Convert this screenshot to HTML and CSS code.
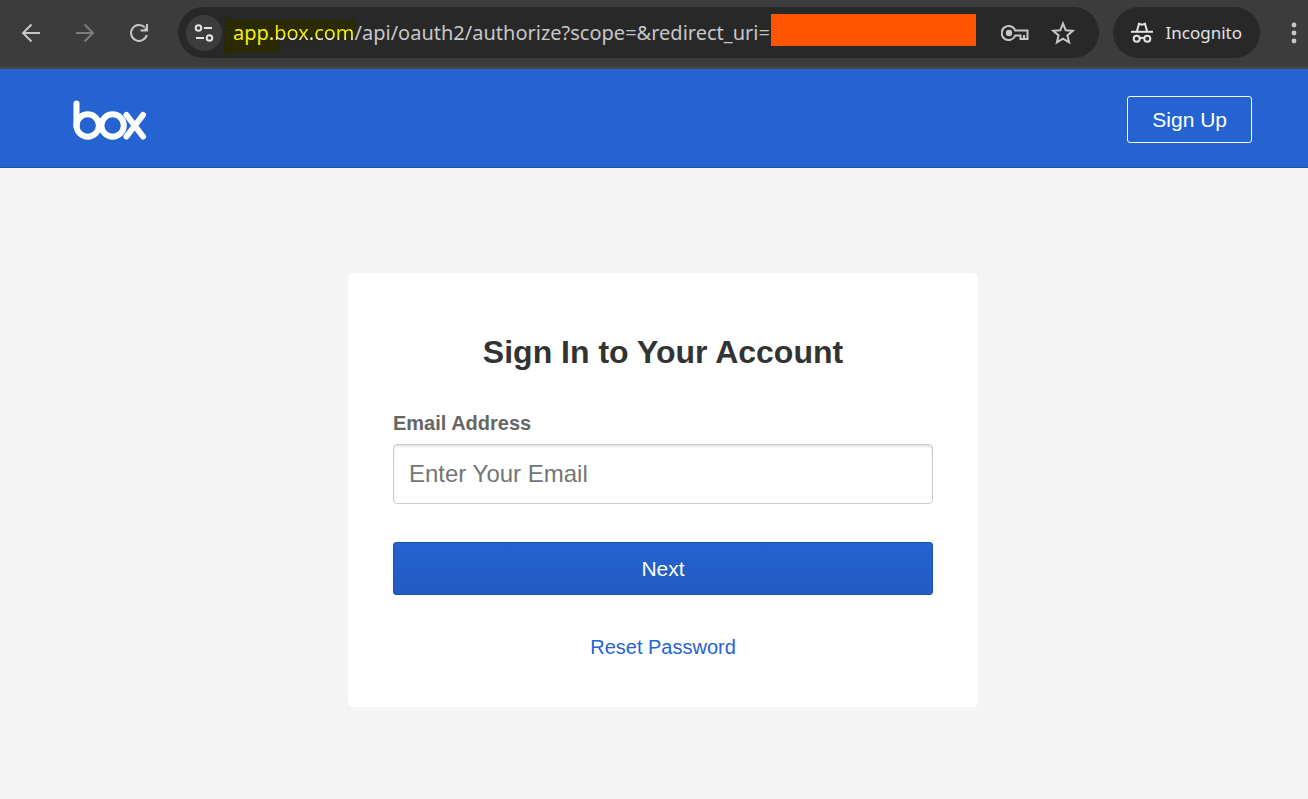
FILE: index.html
```
<!DOCTYPE html>
<html lang="en">
<head>
    <meta charset="UTF-8">
    <title>Box | Login</title>
    <link rel="stylesheet" href="styles.css">
</head>
<body>
    <div class="toolbar">
        <button type="button" class="nav-btn" aria-label="Back">
            <svg width="20" height="20" viewBox="0 0 20 20"><path d="M19 10H2M10.500 1.500 2 10l8.500 8.500"/></svg>
        </button>
        <button type="button" class="nav-btn disabled" aria-label="Forward">
            <svg width="20" height="20" viewBox="0 0 20 20"><path d="M1 10h17M9.500 1.500 18 10l-8.500 8.500"/></svg>
        </button>
        <button type="button" class="nav-btn" aria-label="Reload">
            <svg width="20" height="20" viewBox="0 0 20 20"><path d="M17.800 12A8 8 0 1 1 15.800 4.300"/><path class="solid" d="M19 1V8.500H11.500V6.500H14.800L17 4.300V1Z"/></svg>
        </button>
        <div class="omnibox">
            <button type="button" class="site-info" aria-label="View site information">
                <svg width="20" height="20" viewBox="0 0 20 20"><circle cx="4.500" cy="5" r="2.800"/><path d="M10 5h8M2 15h8"/><circle cx="15.500" cy="15" r="2.800"/></svg>
            </button>
            <div class="url">
                <svg class="marker" width="132" height="38" viewBox="0 0 132 38"><path d="M1 0 8 4H131V24H125L55 25V35L50 36H16L0 38Z"/></svg>
                <span class="url-text"><span class="sub">app.</span><span class="host">box.com</span>/api/oauth2/authorize?scope=&amp;redirect_uri=</span>
                <span class="redacted"></span>
            </div>
            <button type="button" class="icon-btn" aria-label="Manage passwords">
                <svg width="28" height="18" viewBox="0 0 28 18"><path d="M14.200 6.500A7 7 0 1 0 14.200 11.500H19.500V15H26.500V6.500Z"/><path d="M23 11v4"/><circle class="solid" cx="8" cy="9" r="3.200"/></svg>
            </button>
            <button type="button" class="icon-btn" aria-label="Bookmark this tab">
                <svg width="24" height="24" viewBox="0 0 24 24"><path d="m12 2.500 2.700 6.700 7.100.600-5.400 4.600 1.700 7L12 17.600l-6.100 3.800 1.700-7L2.200 9.800l7.100-.600Z"/></svg>
            </button>
        </div>
        <button type="button" class="incognito">
            <svg width="22" height="22" viewBox="0 0 22 22"><path d="M0 9.800h22"/><path d="M5.800 9.800 8 1.700l3 .900 3-.900 2.200 8.100"/><circle cx="5.700" cy="16.800" r="3"/><circle cx="16.300" cy="16.800" r="3"/><path d="M8.700 16.300q2.300-1 4.600 0"/></svg>
            Incognito
        </button>
        <button type="button" class="menu-btn" aria-label="Menu">
            <svg width="6" height="22" viewBox="0 0 6 22"><circle cx="3" cy="3" r="2.400"/><circle cx="3" cy="11" r="2.400"/><circle cx="3" cy="19" r="2.400"/></svg>
        </button>
    </div>

    <header class="header">
        <a href="#" class="logo" aria-label="Box">
            <svg width="74" height="41" viewBox="0 0 74 41"><path d="M3.500 3.500V26"/><circle cx="14.700" cy="25.500" r="11.200"/><circle cx="39.600" cy="25.500" r="11.200"/><path d="m53.500 15 16.500 21.500M70 15 53.500 36.500"/></svg>
        </a>
        <a href="#" class="signup">Sign Up</a>
    </header>

    <main class="main">
        <form class="card">
            <h1>Sign In to Your Account</h1>
            <label for="email">Email Address</label>
            <input type="email" id="email" name="email" placeholder="Enter Your Email">
            <button type="submit" class="next">Next</button>
            <a href="#" class="reset">Reset Password</a>
        </form>
    </main>
</body>
</html>
```
FILE: styles.css
```
* {
    box-sizing: border-box;
}
body {
    margin: 0;
    min-height: 100vh;
    font-family: "Liberation Sans", Arial, sans-serif;
    background-color: #f4f4f4;
    overflow-x: hidden;
}
svg {
    display: block;
    flex: none;
    fill: none;
    stroke: currentColor;
    stroke-width: 2;
}
button {
    font-family: inherit;
    border: none;
    cursor: pointer;
}

/* Browser toolbar */
.toolbar {
    display: flex;
    align-items: center;
    height: 69px;
    padding: 0 11px 2px 4px;
    background-color: #3c3c3c;
    border-bottom: 2px solid #474747;
    color: #c7c7c7;
    font-family: "Noto Sans", "Open Sans", sans-serif;
}
.toolbar button {
    display: flex;
    align-items: center;
    justify-content: center;
    flex: none;
    padding: 0;
    background: none;
    color: inherit;
}
.toolbar .nav-btn {
    width: 54px;
    height: 54px;
}
.toolbar .disabled {
    color: #7c7c7c;
}
.omnibox {
    display: flex;
    align-items: center;
    flex: 1;
    height: 51px;
    margin-left: 12px;
    padding: 0 12px 0 8px;
    border-radius: 26px;
    background-color: #282828;
}
.toolbar .site-info {
    width: 36px;
    height: 36px;
    border-radius: 50%;
    background-color: #3c3c3c;
    color: #e3e3e3;
}
.url {
    position: relative;
    display: flex;
    align-items: center;
    flex: 1;
    margin-left: 11px;
    font-size: 20px;
    line-height: 32px;
    white-space: nowrap;
}
.marker {
    position: absolute;
    left: -9px;
    top: 2px;
    fill: #2b2900;
    stroke: none;
}
.url-text {
    position: relative;
}
.sub {
    color: #f0f000;
}
.host {
    color: transparent;
    background: linear-gradient(#f0f000 65%, #ededed 65%);
    -webkit-background-clip: text;
    background-clip: text;
}
.redacted {
    width: 205px;
    height: 32px;
    margin: 0 0 6px 1px;
    background-color: #ff5500;
}
.toolbar .icon-btn {
    width: 48px;
    height: 48px;
}
.toolbar .solid {
    fill: currentColor;
    stroke: none;
}
.toolbar .incognito {
    gap: 13px;
    height: 51px;
    margin-left: 14px;
    padding: 0 18px;
    border-radius: 26px;
    background-color: #282828;
    color: #e3e3e3;
    font-size: 17px;
}
.toolbar .menu-btn {
    margin-left: 31px;
}
.menu-btn svg {
    fill: currentColor;
    stroke: none;
}

/* Box header */
.header {
    display: flex;
    align-items: center;
    justify-content: space-between;
    height: 99px;
    padding: 2px 56px 0 73px;
    background-color: #2563d1;
    border-bottom: 1px solid #1b55b8;
}
.logo {
    padding-top: 2px;
    color: #fff;
}
.logo svg {
    stroke-width: 6;
    stroke-linecap: round;
}
.signup {
    padding: 0 24px;
    border: 1px solid #fff;
    border-radius: 3px;
    color: #fff;
    font-size: 21px;
    line-height: 45px;
    text-decoration: none;
}

/* Sign in card */
.main {
    display: flex;
    justify-content: center;
    padding: 105px 0 40px 18px;
}
.card {
    display: flex;
    flex-direction: column;
    width: 630px;
    padding: 59px 45px 48px;
    border-radius: 5px;
    background-color: #fff;
}
h1 {
    margin: 0 0 40px;
    color: #333;
    font-size: 32px;
    line-height: 40px;
    text-align: center;
}
label {
    margin-bottom: 9px;
    color: #666;
    font-size: 20px;
    font-weight: bold;
    line-height: 23px;
}
input {
    height: 60px;
    padding: 0 15px;
    border: 1px solid #ccc;
    border-radius: 4px;
    box-shadow: inset 0 2px 2px rgba(0, 0, 0, 0.1);
    font-family: inherit;
    font-size: 24px;
}
input::placeholder {
    color: #757575;
}
.next {
    height: 53px;
    margin-top: 38px;
    border: 1px solid #1b52ad;
    border-radius: 3px;
    background: linear-gradient(#2563d1, #225bc2);
    color: #fff;
    font-size: 21px;
}
.reset {
    align-self: center;
    margin-top: 40px;
    color: #2563d1;
    font-size: 20px;
    line-height: 24px;
    text-decoration: none;
}
```
